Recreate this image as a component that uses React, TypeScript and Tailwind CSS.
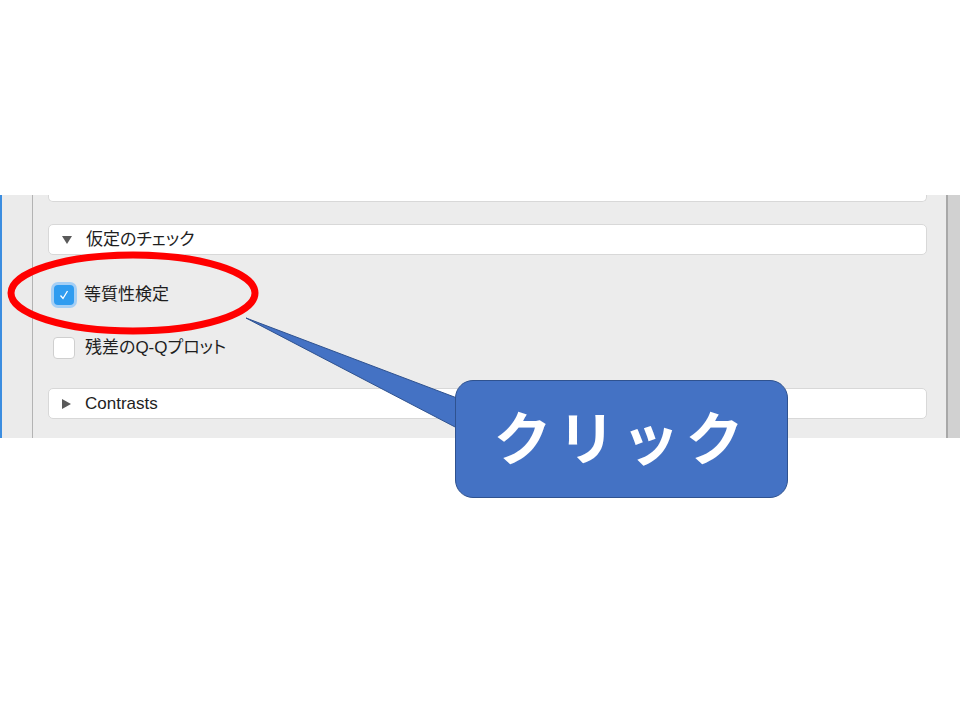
const labelFont = "font-['Liberation_Sans','Noto_Sans_CJK_JP',sans-serif] [font-feature-settings:'palt']";

function Caret({ open }: { open: boolean }) {
    return open ? (
        <svg width="10" height="8" viewBox="0 0 10 8" className="shrink-0">
            <path d="M0 0 H10 L5 8 Z" fill="#5a5a5a" />
        </svg>
    ) : (
        <svg width="9" height="10" viewBox="0 0 9 10" className="shrink-0">
            <path d="M0 0 L9 5 L0 10 Z" fill="#5a5a5a" />
        </svg>
    );
}

function SectionHeader({ title, open }: { title: string; open: boolean }) {
    return (
        <div className="h-[31px] bg-white border border-[#d8d8d8] rounded-[5px] flex items-center pl-[13px] gap-[14px]">
            <Caret open={open} />
            <span className={`text-[17px] text-[#1e1e1e] ${labelFont}`}>{title}</span>
        </div>
    );
}

function CheckRow({ label, checked }: { label: string; checked: boolean }) {
    return (
        <div className="h-[26px] flex items-center">
            {checked ? (
                <div className="ml-[6px] w-[20px] h-[20px] rounded-[4px] bg-[#2f9cf0] ring-[3px] ring-[#a5cff5] flex items-center justify-center">
                    <svg width="12" height="12" viewBox="0 0 12 12">
                        <path d="M2.5 6.5 L5 9.5 L9.5 2" fill="none" stroke="white" strokeWidth="1.3" />
                    </svg>
                </div>
            ) : (
                <div className="ml-[5px] w-[22px] h-[22px] rounded-[4px] bg-white border border-[#cfcfcf]" />
            )}
            <span className={`ml-[10px] text-[17px] text-[#1e1e1e] ${labelFont}`}>{label}</span>
        </div>
    );
}

export default function App() {
    return (
        <div className="relative w-[960px] h-[720px] bg-white overflow-hidden">
            <div className="h-[195px]" />

            {/* cropped options panel */}
            <div className="h-[243px] flex">
                <div className="w-[2px] bg-[#3b8de0]" />
                <div className="w-[30px] bg-[#ebebeb]" />
                <div className="w-px bg-[#b3b3b3]" />
                <div className="flex-1 bg-[#ececec] pl-[15px] pr-[19px] flex flex-col">
                    <div className="h-[7px] bg-white border border-t-0 border-[#d8d8d8] rounded-b-[5px]" />
                    <div className="mt-[22px]">
                        <SectionHeader title="仮定のチェック" open />
                    </div>
                    <div className="mt-[27px]">
                        <CheckRow label="等質性検定" checked />
                    </div>
                    <div className="mt-[27px]">
                        <CheckRow label="残差のQ-Qプロット" checked={false} />
                    </div>
                    <div className="mt-[27px]">
                        <SectionHeader title="Contrasts" open={false} />
                    </div>
                </div>
                <div className="w-[2px] bg-[#a8a8a8]" />
                <div className="w-[12px] bg-[#d1d1d1]" />
            </div>

            {/* annotation: ellipse + callout tail */}
            <svg className="absolute left-0 top-0" width="960" height="720">
                <ellipse cx="133" cy="293" rx="122" ry="38" fill="none" stroke="#ff0000" strokeWidth="7" />
                <polygon points="246,318 457,398 457,428" fill="#4472c4" stroke="#2f528f" strokeWidth="1" />
            </svg>

            <div className="absolute left-[455px] top-[380px] w-[333px] h-[118px] rounded-[18px] bg-[#4472c4] border border-[#2f528f] flex items-center justify-center pb-[8px]">
                <span className="text-white font-bold text-[58px] tracking-[6px] leading-none font-['Noto_Sans_CJK_JP',sans-serif]">
                    クリック
                </span>
            </div>
        </div>
    );
}
